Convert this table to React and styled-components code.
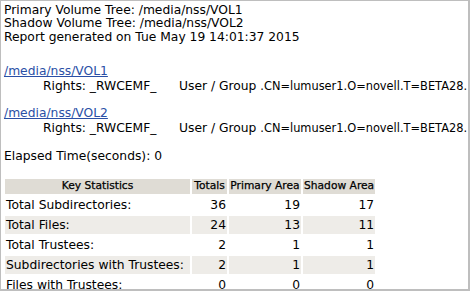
import React from "react";
import styled, { createGlobalStyle } from "styled-components";

const Global = createGlobalStyle`
  html, body { margin: 0; padding: 0; background: #fff; }
  body { font-family: "DejaVu Sans", Verdana, sans-serif; color: #000; }
`;

const Frame = styled.div`
  box-sizing: border-box;
  width: 470px;
  height: 291px;
  border: 1px solid #bebebe;
  border-right-width: 2px;
  border-bottom-width: 2px;
  padding: 3px 0 0 3px;
  overflow: hidden;
  font-size: 12.3px;
`;

const Header = styled.div`
  line-height: 13.3px;
  white-space: nowrap;
`;

const Line = styled.div`
  white-space: nowrap;
`;

const VolumeBlock = styled.div`
  margin-top: ${(p) => (p.$first ? "20.3px" : "13.3px")};
  line-height: 14.5px;
`;

const VolLink = styled.a`
  color: #2a4fa6;
  text-decoration: underline;
  cursor: pointer;
`;

const RightsRow = styled.div`
  padding-left: 39px;
  white-space: nowrap;
  display: flex;
`;

const RightsCell = styled.span`
  width: 136px;
  flex: none;
`;

const Dn = styled.span`
  font-size: 11.4px;
`;

const Elapsed = styled.div`
  margin-top: 13.7px;
  line-height: 14.5px;
`;

const Table = styled.table`
  margin-top: 13.8px;
  border-collapse: separate;
  border-spacing: 2px;
  table-layout: fixed;
  margin-left: -1px;
`;

const Th = styled.th`
  background: #dfdcd5;
  font-weight: normal;
  font-size: 10.7px;
  line-height: 12.5px;
  padding: 1px;
  text-align: center;
  white-space: nowrap;
  color: #000;
  -webkit-text-stroke: 0.25px #000;
`;

const Td = styled.td`
  background: ${(p) => (p.$alt ? "#eeece8" : "transparent")};
  padding: 1px;
  line-height: 16px;
  white-space: nowrap;
  text-align: ${(p) => (p.$num ? "right" : "left")};
`;

const stats = [
  ["Total Subdirectories:", 36, 19, 17],
  ["Total Files:", 24, 13, 11],
  ["Total Trustees:", 2, 1, 1],
  ["Subdirectories with Trustees:", 2, 1, 1],
  ["Files with Trustees:", 0, 0, 0],
];

const volumes = ["/media/nss/VOL1", "/media/nss/VOL2"];

export default function App() {
  return (
    <>
      <Global />
      <Frame>
        <Header>
          <Line>Primary Volume Tree: /media/nss/VOL1</Line>
          <Line>Shadow Volume Tree: /media/nss/VOL2</Line>
          <Line>Report generated on Tue May 19 14:01:37 2015</Line>
        </Header>
        {volumes.map((v, i) => (
          <VolumeBlock key={v} $first={i === 0}>
            <Line>
              <VolLink>{v}</VolLink>
            </Line>
            <RightsRow>
              <RightsCell>Rights: _RWCEMF_</RightsCell>
              <span>
                User / Group <Dn>.CN=lumuser1.O=novell.T=BETA28.</Dn>
              </span>
            </RightsRow>
          </VolumeBlock>
        ))}
        <Elapsed>Elapsed Time(seconds): 0</Elapsed>
        <Table>
          <colgroup>
            <col style={{ width: 185 }} />
            <col style={{ width: 35 }} />
            <col style={{ width: 72 }} />
            <col style={{ width: 72 }} />
          </colgroup>
          <thead>
            <tr>
              <Th>Key Statistics</Th>
              <Th>Totals</Th>
              <Th>Primary Area</Th>
              <Th>Shadow Area</Th>
            </tr>
          </thead>
          <tbody>
            {stats.map((r, i) => (
              <tr key={r[0]}>
                <Td $alt={i % 2 === 1}>{r[0]}</Td>
                <Td $alt={i % 2 === 1} $num>{r[1]}</Td>
                <Td $alt={i % 2 === 1} $num>{r[2]}</Td>
                <Td $alt={i % 2 === 1} $num>{r[3]}</Td>
              </tr>
            ))}
          </tbody>
        </Table>
      </Frame>
    </>
  );
}
